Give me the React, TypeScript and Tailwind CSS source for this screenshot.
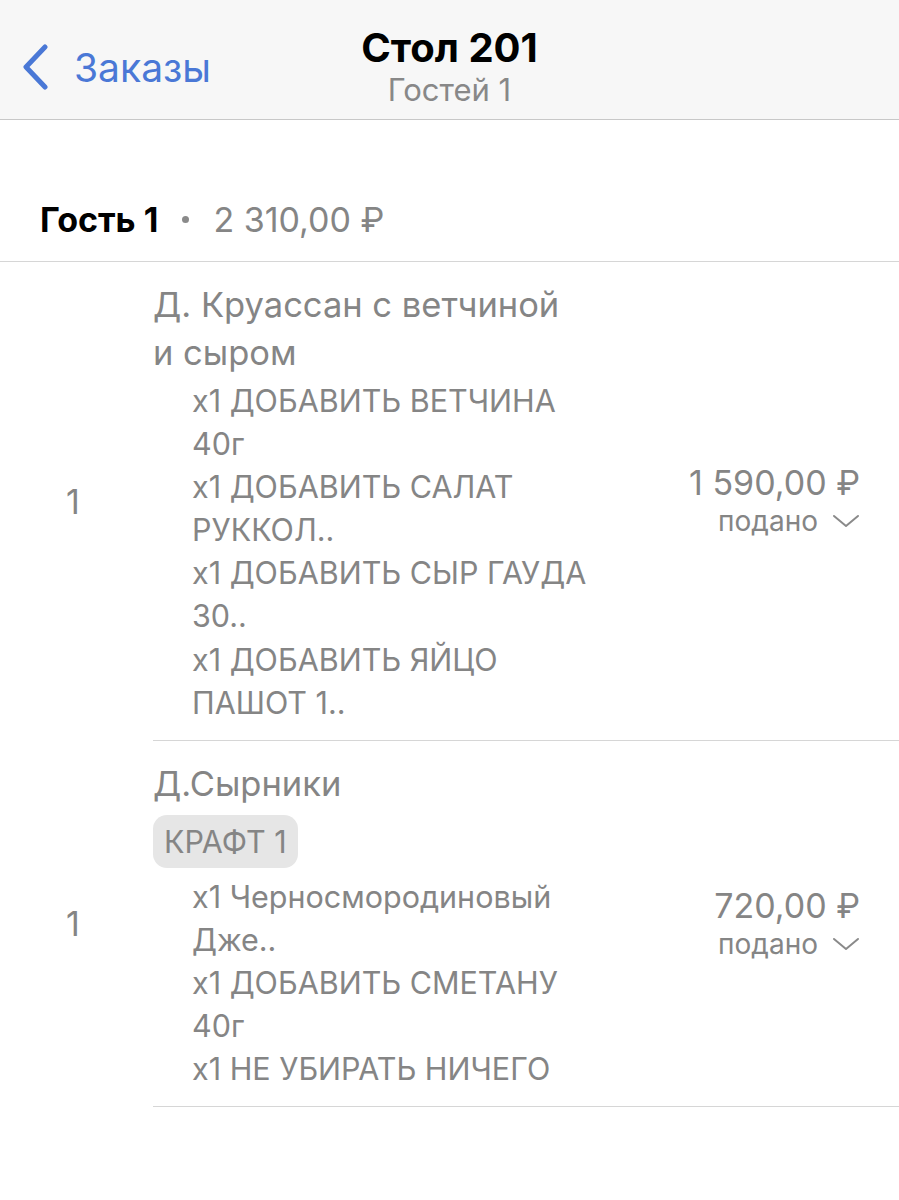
import React from "react";

const font = { fontFamily: "Inter, 'Noto Sans', sans-serif" };

function Chevron() {
  return (
    <svg width="30" height="46" viewBox="0 0 30 46" className="shrink-0">
      <path d="M25 3 L6 23 L25 43" fill="none" stroke="#4a78d6" strokeWidth="5" strokeLinecap="round" strokeLinejoin="round" />
    </svg>
  );
}

function Down() {
  return (
    <svg width="28" height="16" viewBox="0 0 28 16" className="shrink-0">
      <path d="M2 3 L14 13 L26 3" fill="none" stroke="#8a8a8a" strokeWidth="2" strokeLinecap="round" strokeLinejoin="round" />
    </svg>
  );
}

type Item = { name: string[]; badge?: string; mods: string[][]; price: string };

const items: Item[] = [
  {
    name: ["Д. Круассан с ветчиной", "и сыром"],
    mods: [
      ["x1 ДОБАВИТЬ ВЕТЧИНА", "40г"],
      ["x1 ДОБАВИТЬ САЛАТ", "РУККОЛ.."],
      ["x1 ДОБАВИТЬ СЫР ГАУДА", "30.."],
      ["x1 ДОБАВИТЬ ЯЙЦО", "ПАШОТ 1.."],
    ],
    price: "1 590,00 ₽",
  },
  {
    name: ["Д.Сырники"],
    badge: "КРАФТ 1",
    mods: [
      ["x1 Черносмородиновый", "Дже.."],
      ["x1 ДОБАВИТЬ СМЕТАНУ", "40г"],
      ["x1 НЕ УБИРАТЬ НИЧЕГО"],
    ],
    price: "720,00 ₽",
  },
];

function Row({ item }: { item: Item }) {
  return (
    <div className="flex items-center">
      <div className="w-[153px] shrink-0 pl-[66px] text-[34px] text-[#858585]">1</div>
      <div className="flex-1 flex items-center border-b border-[#d6d6d6] pt-[19px] pb-[16px] pr-[39px]">
        <div className="flex-1">
          {item.name.map((l, i) => (
            <div key={i} className="text-[34.5px] leading-[48px] text-[#858585]">{l}</div>
          ))}
          {item.badge && (
            <div className="mt-[7px] mb-[5px] inline-block rounded-[14px] bg-[#e6e6e6] px-[11px] text-[30.5px] leading-[53px] text-[#858585]">
              {item.badge}
            </div>
          )}
          <div className="pl-[39px] mt-[2px]">
            {item.mods.map((m, i) =>
              m.map((l, j) => (
                <div key={i + "-" + j} className="text-[30.5px] leading-[43.1px] text-[#858585]">{l}</div>
              ))
            )}
          </div>
        </div>
        <div className="flex flex-col items-end">
          <div className="text-[34px] leading-[38px] text-[#858585]">{item.price}</div>
          <div className="flex items-center gap-[14px] text-[28px] leading-[38px] text-[#858585]">
            <span>подано</span>
            <Down />
          </div>
        </div>
      </div>
    </div>
  );
}

export default function App() {
  return (
    <div className="w-[899px] h-[1200px] bg-white overflow-hidden" style={font}>
      <div className="relative h-[120px] bg-[#f7f7f7] border-b border-[#c8c8c8] flex flex-col items-center pt-[25px]">
        <div className="absolute left-[20px] top-[44px] flex items-center gap-[24px]">
          <Chevron />
          <span className="text-[39px] text-[#4a78d6] leading-none">Заказы</span>
        </div>
        <div className="text-[40px] font-bold text-black leading-[46px]">Стол 201</div>
        <div className="text-[31px] text-[#888888] leading-[38px]">Гостей 1</div>
      </div>
      <div className="flex items-center h-[142px] pt-[58px] pl-[40px] border-b border-[#d6d6d6]">
        <span className="text-[34px] font-bold text-black">Гость 1</span>
        <span className="mx-[24px] w-[7px] h-[7px] rounded-full bg-[#8a8a8a]" />
        <span className="text-[34px] text-[#858585]">2 310,00 ₽</span>
      </div>
      {items.map((it, i) => (
        <Row key={i} item={it} />
      ))}
    </div>
  );
}
